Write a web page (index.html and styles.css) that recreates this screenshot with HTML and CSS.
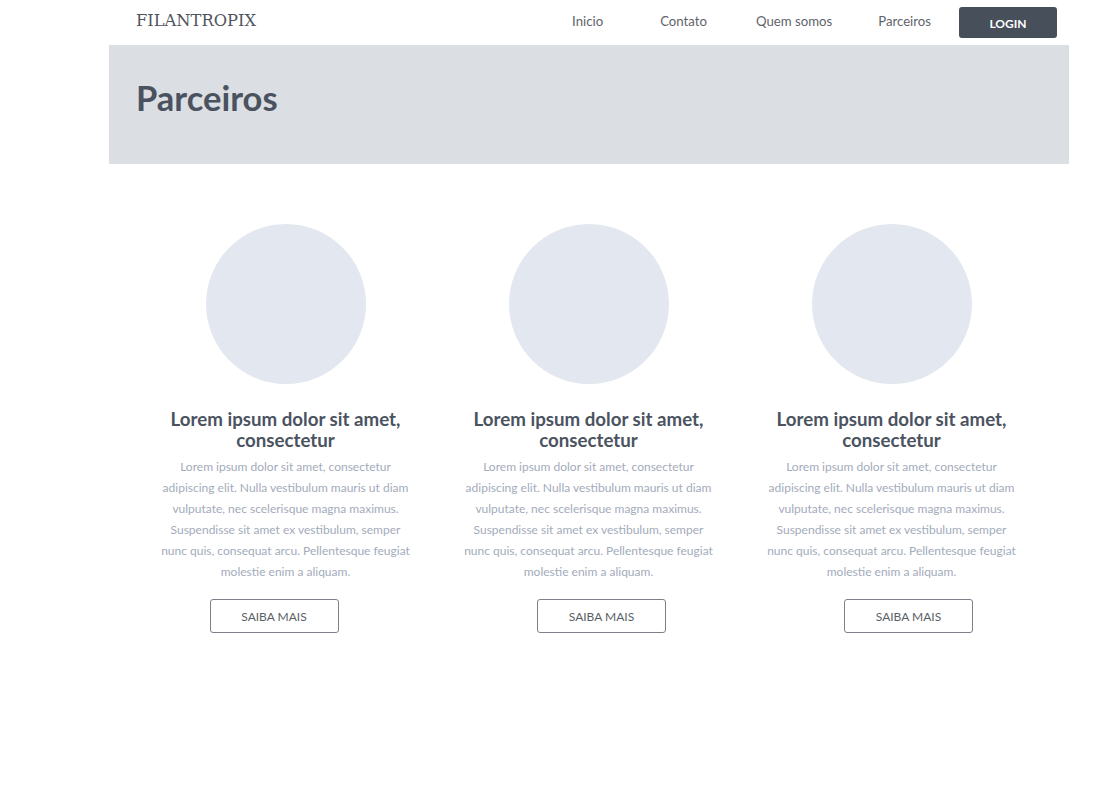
FILE: index.html
```html
<!DOCTYPE html>
<html lang="pt">
<head>
<meta charset="utf-8">
<title>Parceiros - Filantropix</title>
<link rel="stylesheet" href="styles.css">
</head>
<body>
<div class="page">
  <header class="topbar">
    <div class="logo">FILANTROPIX</div>
    <nav class="nav">
      <a class="nav-link" href="#">Inicio</a>
      <a class="nav-link" href="#">Contato</a>
      <a class="nav-link" href="#">Quem somos</a>
      <a class="nav-link" href="#">Parceiros</a>
      <a class="login" href="#">LOGIN</a>
    </nav>
  </header>
  <section class="hero">
    <h1 class="hero-title">Parceiros</h1>
  </section>
  <section class="cards">
    <article class="card">
      <div class="avatar"></div>
      <h2 class="card-title">Lorem ipsum dolor sit amet, consectetur</h2>
      <p class="card-text">Lorem ipsum dolor sit amet, consectetur adipiscing elit. Nulla vestibulum mauris ut diam vulputate, nec scelerisque magna maximus. Suspendisse sit amet ex vestibulum, semper nunc quis, consequat arcu. Pellentesque feugiat molestie enim a aliquam.</p>
      <a class="btn" href="#">SAIBA MAIS</a>
    </article>
    <article class="card">
      <div class="avatar"></div>
      <h2 class="card-title">Lorem ipsum dolor sit amet, consectetur</h2>
      <p class="card-text">Lorem ipsum dolor sit amet, consectetur adipiscing elit. Nulla vestibulum mauris ut diam vulputate, nec scelerisque magna maximus. Suspendisse sit amet ex vestibulum, semper nunc quis, consequat arcu. Pellentesque feugiat molestie enim a aliquam.</p>
      <a class="btn" href="#">SAIBA MAIS</a>
    </article>
    <article class="card">
      <div class="avatar"></div>
      <h2 class="card-title">Lorem ipsum dolor sit amet, consectetur</h2>
      <p class="card-text">Lorem ipsum dolor sit amet, consectetur adipiscing elit. Nulla vestibulum mauris ut diam vulputate, nec scelerisque magna maximus. Suspendisse sit amet ex vestibulum, semper nunc quis, consequat arcu. Pellentesque feugiat molestie enim a aliquam.</p>
      <a class="btn" href="#">SAIBA MAIS</a>
    </article>
  </section>
</div>
</body>
</html>
```
FILE: styles.css
```css
* { box-sizing: border-box; }
body {
  margin: 0;
  background: #ffffff;
  font-family: Lato, "Open Sans", sans-serif;
}
.page {
  width: 960px;
  margin-left: 109px;
}
.topbar {
  height: 45px;
  display: flex;
  align-items: center;
  justify-content: space-between;
  padding: 0 12px 0 27px;
}
.logo {
  font-family: "DejaVu Serif", serif;
  font-size: 16.3px;
  color: #4f555d;
  margin-top: -4px;
}
.nav {
  display: flex;
  align-items: center;
  margin-top: -3px;
}
.nav-link {
  font-size: 13.2px;
  color: #5f646b;
  text-decoration: none;
}
.nav-link:nth-child(1) { margin-right: 57px; }
.nav-link:nth-child(2) { margin-right: 49px; }
.nav-link:nth-child(3) { margin-right: 46px; }
.nav-link:nth-child(4) { margin-right: 28px; }
.login {
  width: 98px;
  height: 31px;
  display: flex;
  align-items: center;
  justify-content: center;
  background: #474f5b;
  color: #ffffff;
  font-weight: 700;
  font-size: 12px;
  text-decoration: none;
  border-radius: 3px;
  margin-top: 2px;
  padding-top: 3px;
}
.hero {
  height: 119px;
  background: #dbdee3;
  padding: 30px 27px 0;
}
.hero-title {
  margin: 0;
  font-size: 34.5px;
  font-weight: 700;
  color: #4a5260;
  line-height: 46px;
}
.cards {
  display: grid;
  grid-template-columns: repeat(3, 303px);
  padding: 60px 25px 0;
}
.card {
  display: flex;
  flex-direction: column;
  align-items: center;
  text-align: center;
}
.avatar {
  width: 160px;
  height: 160px;
  border-radius: 50%;
  background: #e3e7ef;
}
.card-title {
  margin: 25px 0 0;
  width: 260px;
  font-size: 18.7px;
  font-weight: 700;
  line-height: 21px;
  color: #4b5361;
}
.card-text {
  margin: 5px 0 0;
  width: 256px;
  font-size: 12px;
  line-height: 21px;
  color: #a3abbb;
}
.btn {
  margin-top: 17px;
  width: 129px;
  height: 34px;
  display: flex;
  align-items: center;
  justify-content: center;
  border: 1.5px solid #7c8189;
  border-radius: 3px;
  font-size: 12px;
  color: #5a5f66;
  text-decoration: none;
}
.card:nth-child(1) .btn { margin-right: 23px; }
.card:nth-child(2) .btn { margin-left: 26px; }
.card:nth-child(3) .btn { margin-left: 34px; }
```
